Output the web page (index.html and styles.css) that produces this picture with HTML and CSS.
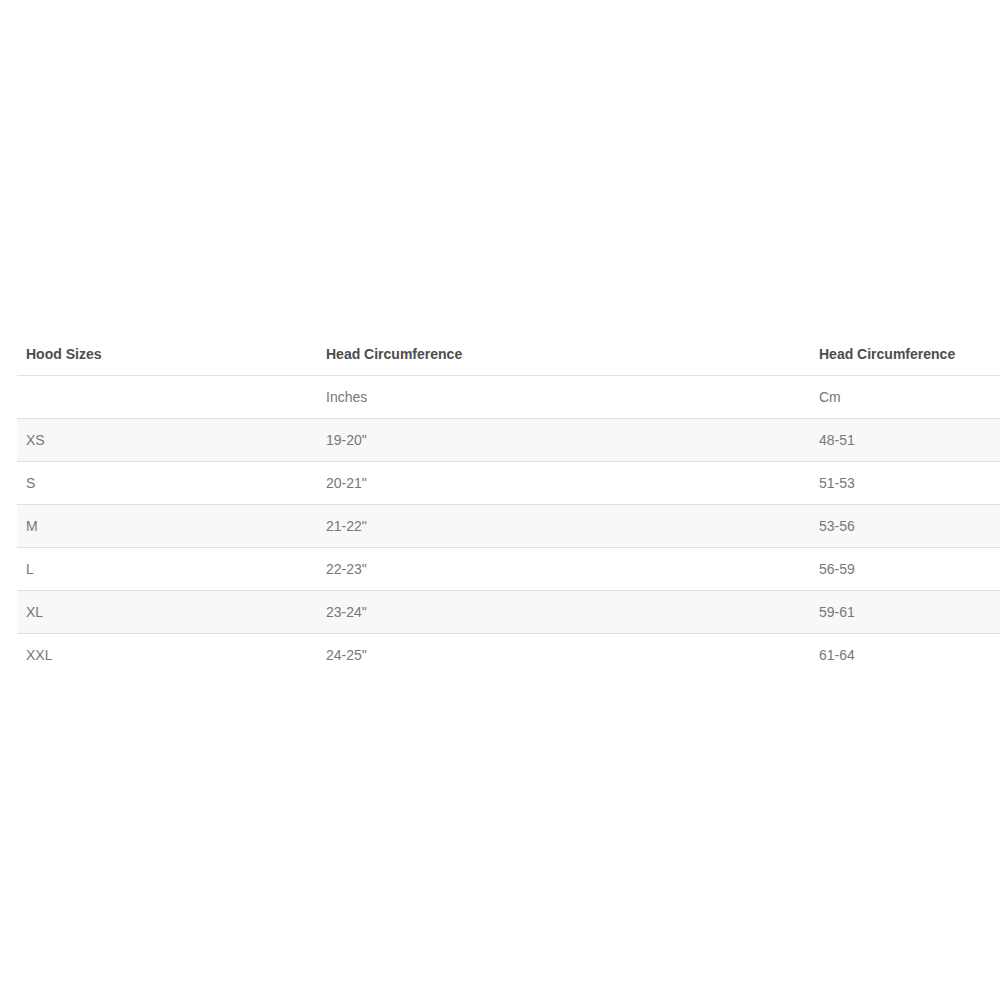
FILE: index.html
```html
<!DOCTYPE html>
<html>
<head>
<meta charset="utf-8">
<link rel="stylesheet" href="styles.css">
</head>
<body>
<div class="wrap">
<table class="size-table">
  <thead>
    <tr><th class="c1">Hood Sizes</th><th class="c2">Head Circumference</th><th class="c3">Head Circumference</th></tr>
  </thead>
  <tbody>
    <tr><td></td><td>Inches</td><td>Cm</td></tr>
    <tr class="alt"><td>XS</td><td>19-20"</td><td>48-51</td></tr>
    <tr><td>S</td><td>20-21"</td><td>51-53</td></tr>
    <tr class="alt"><td>M</td><td>21-22"</td><td>53-56</td></tr>
    <tr><td>L</td><td>22-23"</td><td>56-59</td></tr>
    <tr class="alt"><td>XL</td><td>23-24"</td><td>59-61</td></tr>
    <tr><td>XXL</td><td>24-25"</td><td>61-64</td></tr>
  </tbody>
</table>
</div>
</body>
</html>
```
FILE: styles.css
```css
html, body {
  margin: 0;
  padding: 0;
  background: #fff;
  overflow: hidden;
}
body {
  font-family: "Liberation Sans", Arial, sans-serif;
}
.wrap {
  padding-top: 333px;
  margin-left: 17px;
  overflow: hidden;
}
.size-table {
  width: 1100px;
  border-collapse: collapse;
  font-size: 14px;
  line-height: 20px;
}
.size-table th,
.size-table td {
  text-align: left;
  padding: 11px 9px;
  vertical-align: middle;
}
.size-table th {
  font-weight: bold;
  color: #4d4d4d;
}
.size-table td {
  color: #777;
  border-top: 1px solid #e0e0e0;
  height: 20px;
}
.size-table .c1 { width: 282px; }
.size-table .c2 { width: 475px; }
.size-table tr.alt td {
  background: #f8f8f8;
}
```
